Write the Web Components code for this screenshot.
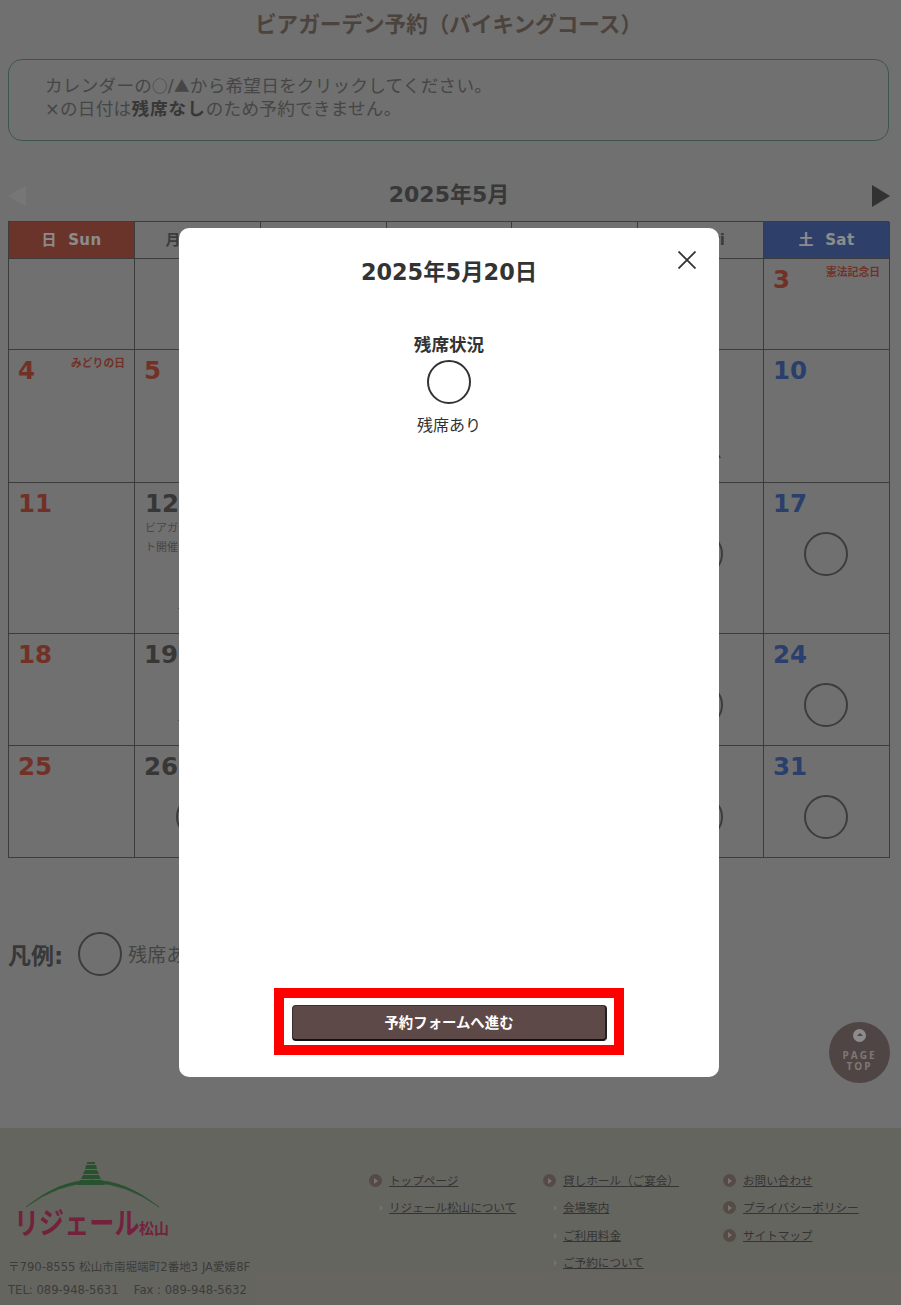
<!DOCTYPE html>
<html lang="ja"><head><meta charset="utf-8"><title>ビアガーデン予約</title>
<style>
html,body{margin:0;padding:0;background:#ccc}
body{font-family:"DejaVu Sans","Noto Sans CJK JP",sans-serif;color:#646464;width:901px;height:1305px;overflow:hidden;position:relative}
</style></head><body>
<template id="t-page"><style>
:host{display:block;width:901px;height:1305px;background:#ccc}
main{padding:0 12px 0 8px;height:1128px;box-sizing:border-box;display:flex;flex-direction:column}
h1{margin:0;height:59px;line-height:50px;text-align:center;font-size:21.6px;font-weight:700;color:#8c7a70}
.note{box-sizing:border-box;height:82px;border:1px solid #6a9f88;border-radius:14px;padding:15px 36px;font-size:17.6px;line-height:23px;color:#808080;letter-spacing:.25px;white-space:nowrap}
.note b{color:#666;letter-spacing:1px}
.note i{font-style:normal;font-family:"Noto Sans CJK JP",sans-serif;font-size:15.5px;line-height:0}
.month{height:80px;display:flex;justify-content:space-between;align-items:flex-end;padding-bottom:11px;box-sizing:border-box;font-weight:700;font-size:22px;color:#666;line-height:30px}
.month svg{display:block;margin-bottom:3px}
.month svg:last-child{margin-right:-1px}
.legend{margin-top:73px;display:flex;align-items:center;gap:15px;font-size:23px;font-weight:700;color:#666;height:46px}
.legend span{font-size:19px;font-weight:400;color:#7d7d7d;margin-left:-9px;position:relative;top:-1px}
.ring{width:44px;height:44px;box-sizing:border-box;border:2px solid #6d6d6d;border-radius:50%}
</style>
<main>
<h1>ビアガーデン予約（バイキングコース）</h1>
<div class="note">カレンダーの<i>○</i>/<i>▲</i>から希望日をクリックしてください。<br>×の日付は<b>残席なし</b>のため予約できません。</div>
<div class="month">
<svg width="18" height="22"><path d="M18 0V22L0 11Z" fill="#d8d8d8"/></svg>
<span>2025年5月</span>
<svg width="18" height="22"><path d="M0 0V22L18 11Z" fill="#5b5b5b"/></svg>
</div>
<slot name="cal"></slot>
<div class="legend">凡例:<i class="ring"></i><span>残席あり</span></div>
</main>
<slot name="foot"></slot>
</template>

<template id="t-cal"><style>
:host{display:block;width:881px}
.g{display:grid;grid-template-columns:126px 126px 126px 125px 126px 126px 126px;grid-template-rows:37px 91px 133px 151px 112px 112px;border-left:1px solid #6d6d6d;border-top:1px solid #6d6d6d;box-sizing:border-box;width:881px}
</style><div class="g"><slot></slot></div></template>

<template id="t-head"><style>
:host{display:flex;align-items:center;justify-content:center;border-right:1px solid #6d6d6d;border-bottom:1px solid #6d6d6d;font-size:15px;font-weight:700;color:#6d6d6d;letter-spacing:.4px;white-space:pre;padding-bottom:3px;box-sizing:border-box}
:host([c=sun]){background:#c4604e;color:#fff}
:host([c=sat]){background:#5476bf;color:#fff}
</style><span><slot></slot></span></template>

<template id="t-day"><style>
:host{display:block;position:relative;border-right:1px solid #6d6d6d;border-bottom:1px solid #6d6d6d;box-sizing:border-box;overflow:hidden}
.n{position:absolute;left:var(--l,9px);top:4px;font-size:24.5px;line-height:34px;font-weight:700;color:#646464}
:host([c=sun]) .n{color:#d05a48}
:host([c=sat]) .n{color:#4d74c4}
.h{position:absolute;right:9px;top:5px;font-size:10.8px;line-height:18px;font-weight:700;color:#d05a48;white-space:nowrap}
.e{position:absolute;left:10px;top:36px;width:105px;font-size:11px;line-height:19px;color:#808080}
.s{position:absolute;left:50%;bottom:var(--b,35px);margin-left:-22px;width:44px;height:44px}
:host([c=sat]) .s{margin-left:-23px}
.o{box-sizing:border-box;border:2px solid #6d6d6d;border-radius:50%}
.t{margin-left:-20px;width:0;height:0;border-left:20px solid transparent;border-right:20px solid transparent;border-bottom:36px solid #646464}
</style><div class="n"></div><div class="h"></div><div class="e"></div><div class="s"></div></template>

<template id="t-foot"><style>
:host{display:flex;height:177px;background:#b9b8af;color:#6d6d6d;font-size:11.6px;box-sizing:border-box;padding-left:8px}
.l{width:361px;padding-top:31px;box-sizing:border-box;flex:none}
svg{display:block;overflow:visible}
.a{margin-top:19px;line-height:23px;white-space:nowrap}
nav{display:flex;padding-top:43px;font-size:11.6px}
ul{list-style:none;margin:0;padding:0}
li{height:27.3px;line-height:20px;padding-left:20px;position:relative;color:#606060;text-decoration:underline;white-space:nowrap}
li::before{content:"";position:absolute;left:0;top:3px;width:13px;height:13px;border-radius:50%;background:#9b887f}
li::after{content:"";position:absolute;left:5px;top:6.5px;border-left:4px solid #d7d2c8;border-top:3px solid transparent;border-bottom:3px solid transparent}
li.s::before{display:none}
li.s::after{left:11px;top:7px;border-left:3px solid #d7d2c8}
.c1{width:174px}.c2{width:180px}
</style>
<div class="l">
<svg width="170" height="78" viewBox="0 0 170 78">
<path d="M18 48Q84 -6 151 48Q84 0 18 48Z" fill="#4a9458" stroke="#4a9458" stroke-width=".6"/>
<path d="M72 21H94L97 26H69ZM75 16H91L93 20H73ZM77 11H89L91 15H75ZM78 6H88L89 10H77ZM79 3H87V5H79Z" fill="#4a9458"/>
<text transform="translate(6 75) scale(.93 1.12)" font-size="27" font-weight="700" fill="#d03f70" font-family="Noto Sans CJK JP, sans-serif">リジェール</text>
<text x="131" y="75" font-size="15" font-weight="700" fill="#d03f70" font-family="Noto Sans CJK JP, sans-serif">松山</text>
</svg>
<div class="a">〒790-8555 松山市南堀端町2番地3 JA愛媛8F<br>TEL: 089-948-5631　 Fax : 089-948-5632</div>
</div>
<nav>
<ul class="c1"><li>トップページ</li><li class="s">リジェール松山について</li></ul>
<ul class="c2"><li>貸しホール（ご宴会）</li><li class="s">会場案内</li><li class="s">ご利用料金</li><li class="s">ご予約について</li></ul>
<ul><li>お問い合わせ</li><li>プライバシーポリシー</li><li>サイトマップ</li></ul>
</nav>
</template>

<template id="t-top"><style>
:host{position:absolute;left:829px;top:1022px;width:61px;height:61px;border-radius:50%;background:#8e7f7c;color:#e3dad7;font-size:10px;font-weight:700;text-align:center;line-height:11px;letter-spacing:2px;font-family:"Open Sans",sans-serif}
i{display:block;width:13px;height:13px;border-radius:50%;background:#fff;margin:7px auto 8px;position:relative}
i::after{content:"";position:absolute;left:3.5px;top:4px;border:3px solid transparent;border-bottom:3px solid #8e7f7c;border-top:0}
</style><i></i>PAGE<br>TOP</template>

<template id="t-overlay"><style>
:host{position:absolute;inset:0;background:rgba(0,0,0,.45);display:flex;justify-content:center;align-items:flex-start;padding:228px 3px 0 0;box-sizing:border-box}
.m{position:relative;width:540px;height:849px;background:#fff;border-radius:10px;display:flex;flex-direction:column;align-items:center;box-sizing:border-box;color:#333;flex:none}
h2{margin:30px 0 0;font-size:22.4px;line-height:28px;font-weight:700;white-space:nowrap}
.x{position:absolute;right:23px;top:23px;display:block}
h3{margin:47px 0 0;font-size:17.6px;line-height:24px;font-weight:700}
.r{width:44px;height:44px;box-sizing:border-box;border:2px solid #333;border-radius:50%;margin-top:3px}
p{margin:10px 0 0;font-size:16px;line-height:24px}
.grow{flex:1}
.hl{box-sizing:border-box;width:350px;height:67px;border:10px solid #f00;margin-bottom:22px;background:#fff;padding:7px 7px 4px 8px}
button{display:block;width:100%;height:36px;border:1px solid #3a2f2c;border-bottom:2px solid #111;border-right:2px solid #222;border-radius:4px;background:#5d4947;color:#fff;font:700 14.4px "DejaVu Sans","Noto Sans CJK JP",sans-serif;padding:0 0 2px}
</style><div class="m" role="dialog">
<h2>2025年5月20日</h2>
<svg class="x" width="18" height="18" viewBox="0 0 18 18"><path d="M.5.5L17.5 17.5M17.5.5L.5 17.5" stroke="#333" stroke-width="1.8"/></svg>
<h3>残席状況</h3><div class="r"></div><p>残席あり</p><div class="grow"></div>
<div class="hl"><button>予約フォームへ進む</button></div>
</div></template>

<x-page>
<x-cal slot="cal" id="cal"></x-cal>
<x-foot slot="foot"></x-foot>
</x-page>
<x-top></x-top>
<x-overlay></x-overlay>

<script>
function mk(name,tid,init){customElements.define(name,class extends HTMLElement{constructor(){super();this.attachShadow({mode:'open'}).appendChild(document.getElementById(tid).content.cloneNode(true));}connectedCallback(){init&&init(this)}});}
mk('x-page','t-page');mk('x-cal','t-cal');mk('x-head','t-head');mk('x-foot','t-foot');mk('x-top','t-top');mk('x-overlay','t-overlay');
mk('x-day','t-day',el=>{const r=el.shadowRoot,q=s=>r.querySelector(s),d=el.dataset;
 q('.n').textContent=d.n||'';q('.h').textContent=d.h||'';q('.e').textContent=d.e||'';
 const s=q('.s');if(d.s==='o')s.classList.add('o');else if(d.s==='t')s.classList.add('t');else s.remove();
});
const cal=document.getElementById('cal');
[['日  Sun','sun'],['月  Mon'],[''],[''],[''],['金  Fri'],['土  Sat','sat']].forEach(([t,c])=>{
 const h=document.createElement('x-head');h.textContent=t;if(c)h.setAttribute('c',c);cal.appendChild(h);});
const rows=[
[{},{},{},{},{},{},{n:3,c:'sun',h:'憲法記念日'}],
[{n:4,c:'sun',h:'みどりの日'},{n:5,c:'sun',l:9},{},{},{},{s:'t',b:24},{n:10,c:'sat',l:9}],
[{n:11,c:'sun'},{n:12,l:10,e:'ビアガーデンイベント開催中',s:'t',b:24},{},{},{},{s:'o',b:57},{n:17,c:'sat',l:9,s:'o',b:57}],
[{n:18,c:'sun'},{n:19,l:9,s:'t',b:24},{},{},{},{s:'o',b:18},{n:24,c:'sat',s:'o',b:18}],
[{n:25,c:'sun'},{n:26,l:9,s:'o',b:18},{},{},{},{s:'o',b:18},{n:31,c:'sat',s:'o',b:18}]];
rows.flat().forEach(o=>{const d=document.createElement('x-day');
 if(o.n)d.dataset.n=o.n;if(o.h)d.dataset.h=o.h;if(o.e)d.dataset.e=o.e;if(o.s)d.dataset.s=o.s;
 if(o.c)d.setAttribute('c',o.c);
 if(o.l)d.style.setProperty('--l',o.l+'px');
 if(o.b!==undefined)d.style.setProperty('--b',o.b+'px');cal.appendChild(d);});
</script>
</body></html>
